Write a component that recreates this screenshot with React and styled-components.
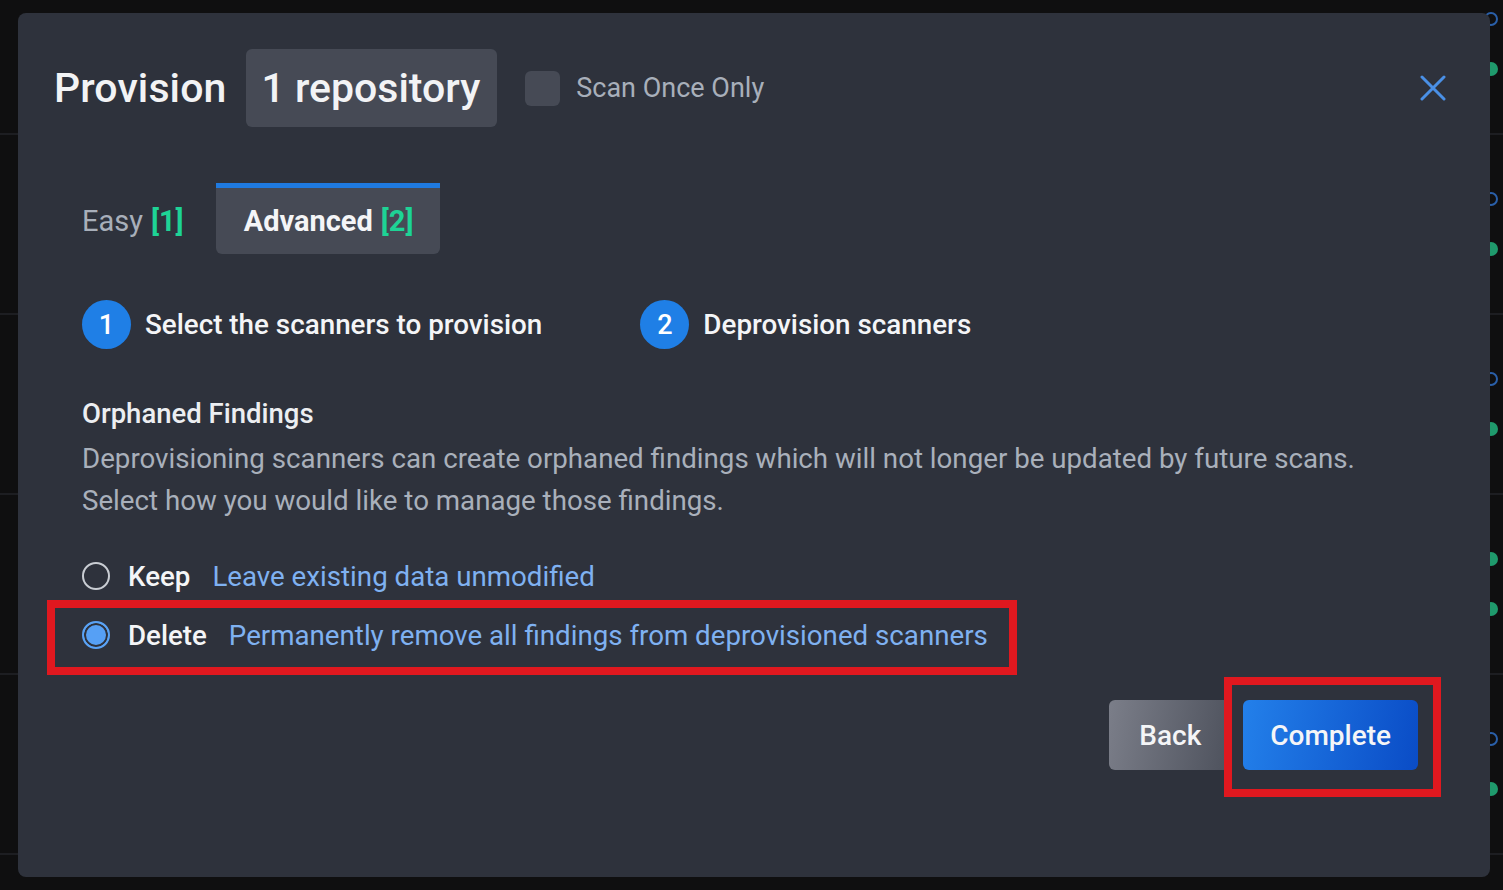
import React from "react";
import styled, { createGlobalStyle } from "styled-components";

const Global = createGlobalStyle`
  html, body { margin: 0; padding: 0; background: #0f0f10; overflow: hidden; }
  body { width: 1503px; height: 890px; position: relative; font-family: Roboto, "Liberation Sans", sans-serif; }
  * { box-sizing: border-box; }
`;

const BODY_FONT = `Roboto, "Liberation Sans", sans-serif`;
const TITLE_FONT = `Roboto, "Liberation Sans", sans-serif`;

/* ---------- backdrop (page behind the dialog) ---------- */
const Backdrop = styled.div`
  display: flex;
  flex-direction: column;
  margin-top: -45px;
`;
const BgRow = styled.div`
  height: 180px;
  border-bottom: 2px solid #1d1e22;
  display: flex;
  justify-content: flex-end;
  padding: 57px 5px 0 0;
`;
const BgIcons = styled.div`
  display: flex;
  flex-direction: column;
  gap: 36px;
`;
const BgDot = styled.span`
  width: 14px;
  height: 14px;
  border-radius: 50%;
  ${(p) =>
    p.$kind === "ring"
      ? "border: 2px solid #2a5fa8; background: transparent;"
      : "background: #1f9a6c;"}
`;

/* ---------- dialog ---------- */
const Dialog = styled.div`
  position: absolute;
  left: 18px;
  top: 13px;
  width: 1472px;
  height: 864px;
  background: #2e323c;
  border-radius: 8px;
  padding: 36px 44px 0 36px;
  display: flex;
  flex-direction: column;
`;

const Header = styled.div`
  display: flex;
  align-items: center;
  height: 78px;
`;
const Title = styled.h2`
  margin: 0;
  font-family: ${TITLE_FONT};
  font-weight: 500;
  font-size: 41px;
  color: #f2f3f5;
  letter-spacing: 0.1px;
`;
const Chip = styled.div`
  margin-left: 20px;
  height: 78px;
  padding: 0 17px 0 15px;
  display: flex;
  align-items: center;
  background: #464a55;
  border-radius: 6px;
  font-family: ${TITLE_FONT};
  font-weight: 500;
  font-size: 41px;
  color: #f2f3f5;
`;
const CheckLabel = styled.label`
  margin-left: 28px;
  display: flex;
  align-items: center;
  gap: 16px;
  font-family: ${BODY_FONT};
  font-size: 27px;
  color: #a8afba;
`;
const CheckBox = styled.span`
  width: 35px;
  height: 35px;
  border-radius: 6px;
  background: #464a55;
`;
const CloseBtn = styled.button`
  margin-left: auto;
  width: 26px;
  height: 26px;
  padding: 0;
  border: 0;
  background: none;
  display: flex;
`;

const Body = styled.div`
  padding-left: 28px;
  display: flex;
  flex-direction: column;
`;

const Tabs = styled.div`
  margin: 56px 0 0 -28px;
  display: flex;
  gap: 6px;
`;
const Tab = styled.div`
  height: 71px;
  padding: 0 26px 0 28px;
  display: flex;
  align-items: center;
  gap: 8px;
  border-top: 5px solid ${(p) => (p.$active ? "#1f7ae0" : "transparent")};
  background: ${(p) => (p.$active ? "#464a55" : "transparent")};
  border-radius: 0 0 6px 6px;
  font-family: ${BODY_FONT};
  font-size: 29px;
  font-weight: ${(p) => (p.$active ? 700 : 400)};
  color: ${(p) => (p.$active ? "#f4f5f7" : "#a8afba")};
`;
const TabCount = styled.span`
  color: #1ed395;
  font-weight: 700;
`;

const Steps = styled.div`
  margin-top: 46px;
  display: flex;
  align-items: center;
  gap: 98px;
`;
const Step = styled.div`
  display: flex;
  align-items: center;
  gap: 14px;
`;
const StepNum = styled.span`
  width: 49px;
  height: 49px;
  border-radius: 50%;
  background: #1f7fe6;
  color: #fff;
  display: flex;
  align-items: center;
  justify-content: center;
  font-family: ${TITLE_FONT};
  font-weight: 500;
  font-size: 27px;
`;
const StepLabel = styled.span`
  font-family: ${BODY_FONT};
  font-weight: 500;
  font-size: 27.8px;
  color: #f4f5f7;
`;

const SectionTitle = styled.h3`
  margin: 47px 0 0;
  font-family: ${BODY_FONT};
  font-weight: 500;
  font-size: 27.5px;
  line-height: 36px;
  color: #eceef1;
`;
const Desc = styled.p`
  margin: 6px 0 0;
  font-family: ${BODY_FONT};
  font-size: 27.7px;
  line-height: 42px;
  color: #a9b0bb;
`;

const Options = styled.div`
  margin-top: 34px;
  display: flex;
  flex-direction: column;
  align-items: flex-start;
  gap: 19px;
`;
const Option = styled.div`
  position: relative;
  height: 40px;
  display: flex;
  align-items: center;
  font-family: ${BODY_FONT};
  font-size: 27.7px;
`;
const Radio = styled.span`
  width: 28px;
  height: 28px;
  border-radius: 50%;
  border: 2px solid ${(p) => (p.$checked ? "#5aa3f6" : "#c9cdd3")};
  background: ${(p) => (p.$checked ? "#56a0f5" : "transparent")};
  box-shadow: ${(p) => (p.$checked ? "inset 0 0 0 2px #2e323c" : "none")};
`;
const OptName = styled.span`
  margin-left: 18px;
  font-weight: 500;
  color: #f4f5f7;
`;
const OptDesc = styled.span`
  margin-left: 22px;
  color: #7fb1f1;
`;
const Highlight = styled.span`
  position: absolute;
  top: ${(p) => p.$t}px;
  right: ${(p) => p.$r}px;
  bottom: ${(p) => p.$b}px;
  left: ${(p) => p.$l}px;
  border: 8px solid #e0181f;
  pointer-events: none;
`;

const Footer = styled.div`
  margin-top: 45px;
  padding-right: 28px;
  display: flex;
  justify-content: flex-end;
  gap: 12px;
`;
const Btn = styled.button`
  position: relative;
  height: 70px;
  padding: 0 ${(p) => (p.$primary ? 27 : 30)}px;
  border: 0;
  border-radius: 6px;
  font-family: ${BODY_FONT};
  font-weight: 500;
  font-size: 28px;
  color: #f4f5f7;
  background: ${(p) =>
    p.$primary
      ? "linear-gradient(100deg, #2380ea 0%, #0a4cc6 100%)"
      : "linear-gradient(100deg, #7b7e89 0%, #4d515c 100%)"};
`;

const bgRows = [
  ["ring", "dot"],
  ["ring", "dot"],
  ["ring", "dot"],
  ["dot", "dot"],
  ["ring", "dot"],
];

export default function App() {
  return (
    <>
      <Global />
      <Backdrop>
        {bgRows.map((r, i) => (
          <BgRow key={i}>
            <BgIcons>
              {r.map((k, j) => (
                <BgDot key={j} $kind={k} />
              ))}
            </BgIcons>
          </BgRow>
        ))}
      </Backdrop>
      <Dialog>
        <Header>
          <Title>Provision</Title>
          <Chip>1 repository</Chip>
          <CheckLabel>
            <CheckBox />
            Scan Once Only
          </CheckLabel>
          <CloseBtn aria-label="close">
            <svg width="26" height="26" viewBox="0 0 26 26">
              <path d="M2 2 L24 24 M24 2 L2 24" stroke="#4a90e6" strokeWidth="3" strokeLinecap="round" />
            </svg>
          </CloseBtn>
        </Header>
        <Body>
          <Tabs>
            <Tab>
              Easy <TabCount>[1]</TabCount>
            </Tab>
            <Tab $active>
              Advanced <TabCount>[2]</TabCount>
            </Tab>
          </Tabs>
          <Steps>
            <Step>
              <StepNum>1</StepNum>
              <StepLabel>Select the scanners to provision</StepLabel>
            </Step>
            <Step>
              <StepNum>2</StepNum>
              <StepLabel>Deprovision scanners</StepLabel>
            </Step>
          </Steps>
          <SectionTitle>Orphaned Findings</SectionTitle>
          <Desc>
            Deprovisioning scanners can create orphaned findings which will not longer be updated by future scans.
            <br />
            Select how you would like to manage those findings.
          </Desc>
          <Options>
            <Option>
              <Radio />
              <OptName>Keep</OptName>
              <OptDesc>Leave existing data unmodified</OptDesc>
            </Option>
            <Option>
              <Radio $checked />
              <OptName>Delete</OptName>
              <OptDesc>Permanently remove all findings from deprovisioned scanners</OptDesc>
              <Highlight $t={-15} $r={-29} $b={-20} $l={-35} />
            </Option>
          </Options>
          <Footer>
            <Btn>Back</Btn>
            <Btn $primary>
              Complete
              <Highlight $t={-23} $r={-23} $b={-27} $l={-19} />
            </Btn>
          </Footer>
        </Body>
      </Dialog>
    </>
  );
}
